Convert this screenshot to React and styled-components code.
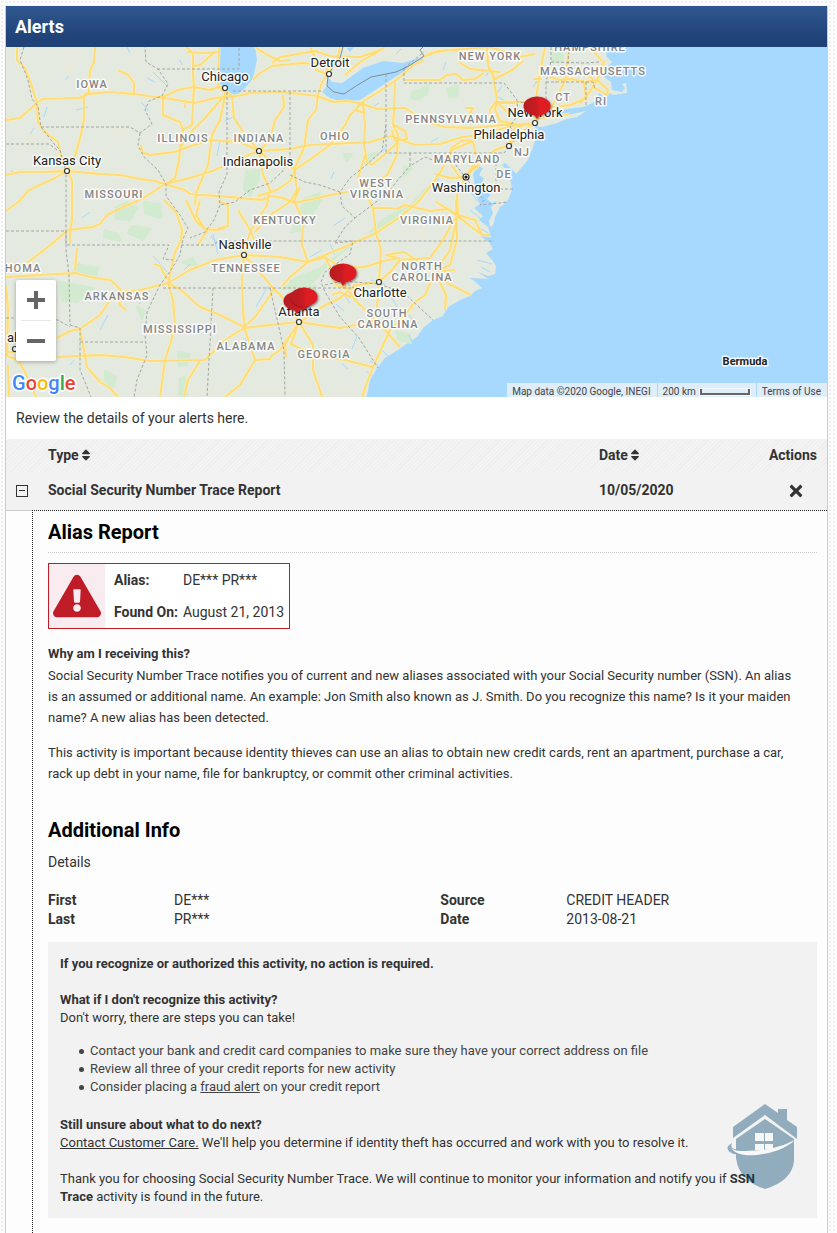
import { useState } from "react";
import styled, { createGlobalStyle } from "styled-components";
import { FaExclamationTriangle, FaSort, FaTimes } from "react-icons/fa";

const GlobalStyle = createGlobalStyle`
  * {
    box-sizing: border-box;
  }

  body {
    margin: 0;
    color: #333;
    background-color: #fcfcfc;
    background-image: radial-gradient(#efefef 1px, transparent 1px);
    background-size: 4px 4px;
    font-family: Roboto, "Liberation Sans", sans-serif;
    font-size: 14px;
    line-height: 18px;
  }

  h1, h2, h3, p, ul, dl, dd {
    margin: 0;
    padding: 0;
  }

  button {
    border: none;
    padding: 0;
    background: none;
    color: inherit;
    font: inherit;
    cursor: pointer;
  }

  a {
    color: inherit;
  }
`;

const Page = styled.main`
  padding: 6px 9px 0 5px;
`;

const Panel = styled.section`
  min-height: calc(100vh - 6px);
  border: 1px solid #ccc;
  border-width: 0 1px;
  background: #fff;
`;

const PanelHeader = styled.header`
  display: flex;
  align-items: center;
  height: 41px;
  padding: 0 9px;
  background: linear-gradient(#2f578f, #1f4278 80%);
  color: #fff;
`;

const Title = styled.h1`
  font-size: 18px;
  font-weight: 700;
`;

const MapFrame = styled.div`
  position: relative;
  height: 350px;
  overflow: hidden;
  background: #a7d9ff;
`;

const MapSvg = styled.svg`
  display: block;
  width: 100%;
  height: 100%;
`;

const MapText = styled.text`
  font-size: ${({ $kind }) => ($kind === "city" ? "13px" : "11px")};
  font-weight: ${({ $kind }) => ($kind === "city" ? 400 : $kind === "island" ? 700 : 500)};
  fill: ${({ $kind }) => ($kind === "state" ? "#858585" : "#222")};
  letter-spacing: ${({ $kind }) => ($kind === "state" ? "1px" : "normal")};
  text-anchor: middle;
  paint-order: stroke;
  stroke: #fff;
  stroke-opacity: 0.85;
  stroke-width: 3px;
  stroke-linejoin: round;
`;

const Zoom = styled.div`
  position: absolute;
  left: 10px;
  bottom: 36px;
  display: flex;
  flex-direction: column;
  align-items: center;
  width: 40px;
  border-radius: 2px;
  background: #fff;
  box-shadow: 0 1px 4px rgba(0, 0, 0, 0.3);
`;

const ZoomButton = styled.button`
  display: grid;
  place-items: center;
  width: 30px;
  height: 40px;

  &:first-child {
    height: 41px;
    border-bottom: 1px solid #e6e6e6;
  }
`;

const Logo = styled.svg`
  position: absolute;
  left: 4px;
  bottom: 0;
  font-size: 20px;
  font-weight: 500;
`;

const Legal = styled.div`
  position: absolute;
  right: 0;
  bottom: 0;
  display: flex;
  gap: 1px;
  height: 14px;
  color: #444;
  font-size: 10px;
  line-height: 17px;
`;

const LegalItem = styled.span`
  display: flex;
  gap: 4px;
  padding: 0 6px 0 5px;
  background: rgba(245, 245, 245, 0.7);

  a {
    text-decoration: none;
  }
`;

const ScaleBar = styled.span`
  width: 50px;
  height: 6px;
  margin-top: 6px;
  border: 2px solid #666;
  border-top: none;
  outline: 1px solid rgba(255, 255, 255, 0.6);
`;

const Intro = styled.p`
  padding: 12px 10px;
`;

const AlertTable = styled.table`
  width: 100%;
  border-spacing: 0;
  table-layout: fixed;

  th, td {
    padding: 0 0 2px;
    text-align: left;
  }

  col:nth-child(1) {
    width: 26px;
  }

  col:nth-child(3) {
    width: 160px;
  }

  col:nth-child(4) {
    width: 68px;
  }
`;

const HeadRow = styled.tr`
  height: 33px;
  background: repeating-linear-gradient(135deg, #f3f3f3 0 2px, #eeeeee 2px 3px);
`;

const AlertRow = styled.tr`
  height: 38px;
  background: #f2f2f2;
  font-weight: 700;
`;

const Cell = styled.td`
  && {
    padding-left: ${({ $indent }) => ($indent ? 16 : 0)}px;
    padding-right: ${({ $end }) => $end || 0}px;
    text-align: ${({ $end }) => ($end ? "right" : "left")};
  }

  svg {
    vertical-align: middle;
  }
`;

const SortButton = styled.button`
  display: inline-flex;
  align-items: center;
  font-weight: 700;
  vertical-align: middle;
`;

const DetailCell = styled.td`
  && {
    padding: 9px 10px 15px 15px;
  }

  border-top: 1px dotted #222;
  border-left: 1px dotted #222;
  background: #fdfdfd;
`;

const Gutter = styled.td`
  border-top: 1px solid #ccc;
  background: #fdfdfd;
`;

const Heading = styled.h2`
  color: #000;
  font-size: 20px;
  font-weight: 700;
  line-height: 24px;
`;

const AliasHeading = styled(Heading)`
  padding-bottom: 8px;
  border-bottom: 1px dotted #ccc;
`;

const AliasCard = styled.div`
  display: inline-flex;
  margin: 10px 0 13px;
  border: 1px solid #c01c28;
  background: #fff;
  vertical-align: top;
`;

const Warning = styled.div`
  display: grid;
  place-items: center;
  width: 56px;
  background: #f9ecf0;
  color: #c01c28;
`;

const AliasFacts = styled.dl`
  display: grid;
  grid-template-columns: auto auto;
  align-items: center;
  column-gap: 5px;
  padding: 0 5px 0 9px;
  line-height: 32px;

  dt {
    font-weight: 700;
  }
`;

const Copy = styled.p`
  margin-bottom: 14px;
  padding-right: 20px;
  font-size: 13px;
  line-height: 21px;
`;

const Question = styled.h3`
  font-size: 13px;
  font-weight: 700;
  line-height: ${({ $loose }) => ($loose ? 23 : 18)}px;
`;

const InfoHeading = styled(Heading)`
  margin: 34px 0 11px;
`;

const InfoGrid = styled.dl`
  display: grid;
  grid-template-columns: 126px 17fr 126px 16fr;
  margin: 20px 0 13px;
  line-height: 19px;

  dt {
    font-weight: 700;
  }
`;

const Advice = styled.div`
  display: flex;
  flex-direction: column;
  gap: 18px;
  padding: 13px 32px 12px 12px;
  background: #f2f2f2;
  font-size: 13px;
`;

const Steps = styled.ul`
  margin: -3px 0 2px;
  padding-left: 19px;
  color: #444;
  list-style: none;

  li::before {
    content: "";
    display: inline-block;
    width: 5px;
    height: 5px;
    margin: 0 6px 1px 0;
    border-radius: 50%;
    background: #444;
  }
`;

const Badge = styled.a`
  position: fixed;
  right: 38px;
  bottom: 43px;
  opacity: 0.4;

  svg {
    display: block;
  }
`;

const LAND =
  "M0 40H608L606 56 612 62 607 67 604 77 611 82 612 90 622 92 625 88 622 84 626 83 627 93 613 95 609 93 605 98 599 93 595 102 583 107 567 109 553 112 542 118 557 116 568 115 586 111 577 117 567 119 557 123 542 127 535 126 536 137 533 147 528 160 522 167 516 174 513 170 505 163 502 165 508 172 511 183 512 190 508 200 503 205 500 207 495 217 493 225 490 227 489 221 493 213 491 207 497 201 492 203 487 199 491 194 485 192 481 184 484 178 479 175 483 168 478 166 473 174 475 187 467 190 476 196 480 204 474 208 483 216 479 220 488 227 491 237 480 236 489 242 493 249 486 253 492 260 496 266 495 274 488 276 478 272 488 279 471 278 482 288 475 291 470 296 462 299 448 307 443 316 433 320 423 328 417 337 405 345 398 350 385 358 377 368 370 380 366 400H0Z";

const WATER =
  "M219 40L220 67 218 78 222 88 229 95 238 94 246 87 253 78 257 60 254 40ZM322 92L328 85 327 76 332 82 342 83 348 79 363 68 383 61 403 63 423 57 422 62 403 72 380 87 360 100 342 102 330 98ZM347 48L354 47 350 52ZM591 103L611 102 613 104 602 101ZM623 106L626 107 623 107Z";

const GREENS =
  "M412 92L421 89 429 85 427 94 418 100 411 98ZM447 89L458 85 457 96 449 97ZM553 55L562 50 563 61 553 62ZM404 166L412 168 404 176ZM364 157L377 152 373 160 364 163ZM344 154L352 154 347 161ZM246 172L260 170 258 180 250 196 244 189ZM304 199L319 193 321 200 302 230 291 232 300 214ZM440 174L423 196 400 214 384 226 370 232 388 216 409 207ZM350 246L330 262 312 283 283 289 296 278 320 268ZM290 281L316 286 316 302 291 298ZM396 331L410 335 411 343 399 340ZM116 207L127 202 138 208 130 220 116 219ZM144 202L160 204 162 218 145 214ZM105 230L118 234 121 241 104 238ZM132 226L151 229 143 240 128 233ZM78 264L98 268 96 276 73 272ZM60 282L94 288 77 302 62 300ZM178 352L190 354 187 365 179 366ZM182 263L193 258 197 266ZM105 371L116 377 113 388 105 384ZM180 378L185 377 187 396 179 395ZM137 307L145 311 142 319Z";

const PALE_LANDS =
  "M387 50L405 56 381 60 372 53ZM377 116L385 122 379 129ZM325 110L340 108 337 116ZM60 60L81 63 70 78ZM104 132L125 127 128 142ZM23 128L37 139 29 150ZM412 230L430 222 424 238ZM404 299L425 307 410 320ZM322 334L347 338 343 350 326 346ZM178 225L196 231 184 240ZM125 318L136 330 126 340Z";

const RIVERS = [
  "M127 47l3 6M153 72l15 15M147 78l8 4M180 60l2 5M66 80l2-4M44 117l3-10M76 110l12-3M141 102l8 9M217 156l3-16M30 134l4-6M11 170l3 3M225 121l10-5",
  "M82 218l8-6M153 256l14 16M149 291l-10 13M108 315l-8 15M213 234l5 20M268 286l-12 21M190 264l-6 6M245 338l2 4M70 365l4-5M218 245l-7-9",
  "M379 153l6-5M331 179l3-7M371 108l8-5M446 62l-3 8M490 70l-4 6M431 142l7-4M345 218l-12 8M439 178l-6 11M502 86l-5 7M401 49l-5 5",
  "M310 257l12-7M330 244l5 11M350 303l-5-7M371 280l14 4M391 297l7 11M336 304l8 7M357 336l-5 13M416 275l4-8M430 225l9-6M342 364l6 5M409 315l5 7",
  "M551 108L540 115M509 179l-7-6M478 202L467 187M481 219L470 210M491 235L477 226M492 264L477 260M481 283L470 278M490 272L481 267M378 365L370 361M389 357L382 350M413 344L409 335M373 377L366 371M541 75l-8 12M559 72l-4 11M505 101l-7-4",
];

const ROADS = [
  "M17 47V60L25 68 31 84 37 103 38 122 45 132 58 142 62 160 67 171 72 180 72 220 70 230",
  "M6 120L20 118 37 103 42 99 80 98 88 94 110 92 135 94 155 97 165 98 195 103 215 98 235 96",
  "M95 47L94 62 90 70 89 92 84 95 84 120 80 138 75 156 67 171 55 178 29 190 20 200",
  "M118 70L128 75 134 83V93M155 97L165 96 178 90 193 87 210 90 222 86",
  "M163 99V115L180 122 183 130 180 148 179 160 175 178 165 184",
  "M186 47L193 53V75L194 88 193 105 192 125 182 130M187 52L203 53 219 52M194 66L200 65 215 52M185 103V108",
  "M219 47L218 85 226 94 217 104 205 118 193 130 180 148M226 92L220 120 212 135 208 165 196 193 195 205",
  "M6 175L20 172 45 172 67 171 100 174 120 175 140 179 155 181 165 184 190 178 215 170 235 160 259 151 290 149 310 145 330 144 370 142 390 136 399 139",
  "M165 184L145 197 135 202 125 206 107 215 100 224 93 227 68 230 48 247 36 256 27 263",
  "M165 184L185 190 190 194 230 197 262 200 271 196 283 198 295 203 330 195 348 192M70 230V244M6 211L21 200",
  "M259 151L240 142 222 141 210 140 185 148 174 152 150 155 142 152 141 145",
  "M227 92L232 97 234 118 245 135 259 151 263 175 270 190 267 205 250 232 244 255",
  "M222 88L233 97 250 93 280 92 300 94 317 96 333 102 347 101 360 103 377 109 405 108 416 115 430 123 445 127 475 128 500 125 530 124",
  "M259 151L270 140 275 120 284 107 283 95M259 151L270 160 296 169 312 158 330 145 345 125 350 115 365 100 385 88 400 77 413 65 424 60",
  "M253 80L260 73 272 66 303 63 325 65 329 74M255 47L267 55 280 61 290 60M272 63L280 57 315 51 330 56 360 57 380 50M310 47L314 55 316 70 327 74M345 75L360 62 374 54 385 47",
  "M340 47L337 60 329 72 322 82 318 95 316 110 308 120 304 148 294 169 297 190 290 202 270 215 255 232M296 169L290 181 277 190 258 196",
  "M363 102L365 125 364 145 367 162 372 165 384 155 398 142M365 155L358 178 373 208 376 233 381 250 379 282 376 320",
  "M395 83L394 110 393 125 398 135 397 155 387 175 372 185M394 125L405 131 407 139 395 141 392 130M360 102L356 110 364 113",
  "M423 57L438 51 450 50 458 51 460 63 470 69 500 72M430 53L450 50 490 47 520 57 535 54M405 80L440 80 447 75 456 74 463 80 475 79 484 73",
  "M487 47L488 65 493 75 497 100 490 110 492 122M488 67L495 79 512 70 523 61M465 108L473 108 467 118M498 103L515 103M497 102L507 112",
  "M399 139L415 145 440 144 462 137 480 135 515 125M473 141L452 150 440 173 420 200 400 217 376 233 342 248 308 262 290 277 282 286",
  "M473 141L463 140 451 148 450 163 460 177 466 177M473 141L477 160 466 177 450 178 435 174",
  "M466 177L477 165 495 150 509 145 525 130 535 121 545 108 570 105 585 99 592 88 597 80 605 65M466 177L478 164",
  "M466 177L457 195 458 215 453 235 450 250 435 272 425 295 415 302 405 315 390 330 383 345 373 367 366 385 362 397",
  "M373 208L388 208 397 209 405 205 430 211 448 209 458 215 475 220 482 235M436 202L448 209 482 235 490 235",
  "M458 215L453 222 443 240 430 258 400 260 390 272 379 282 355 285 340 298 320 308 300 322 285 342 280 350 270 357",
  "M6 277L40 275 75 273 90 277 110 280 116 285 122 292 140 290 168 283 190 270 215 260 244 255 280 257 308 262 325 257 342 268 365 267 383 261 400 258",
  "M57 357L100 355 125 357 150 361 205 360 225 340 244 328 270 325 299 322 340 328 355 325 376 320",
  "M164 200L176 212 182 230 181 240 175 252 168 283 173 300 175 325 170 345 165 360 160 397M200 361L188 380 184 397",
  "M244 255L242 280 243 310 245 330 255 360 240 385 225 397M255 360L270 359 272 355",
  "M57 338L70 331 80 329 100 315 110 300 118 293M80 329L83 345 87 367 100 382 110 388 118 397M118 293L120 305 126 310",
  "M168 283L181 290 200 307 220 315 244 327 255 317 267 300 274 288M154 264L160 266 167 279",
  "M244 255L262 275 273 288 285 300 299 322 313 345 313 370 322 397M308 355L345 360 372 367",
  "M308 262L302 245 303 220 294 201 300 187M325 257L330 267 336 285 350 290M342 268L345 285 355 300 376 320 400 347M340 265L338 278",
  "M238 210L250 230 254 240M200 201L196 215 205 229 217 230 225 228M186 200L196 221 207 231 198 245M217 229L228 226 228 205 218 201",
  "M6 285L8 310 7 356 18 360 25 372 36 397M6 352L17 352M8 365L9 397M75 270L77 248M299 322L285 344 286 357",
  "M516 124L500 121 495 109 497 102 533 102 545 108M535 121L536 99 539 78 543 57 545 47M542 79L533 79M549 77L560 80 572 79 585 82 597 80",
  "M545 109L552 106 565 81 568 57 570 47M583 80L586 96 580 103M597 80L608 90 607 95 595 88 592 78M590 47L602 61M592 78L579 69 600 68 605 61",
  "M530 123L515 128 509 145 493 151M535 119L556 116 570 114M456 200L457 240 450 265 435 272 445 282 471 295M435 272L446 295 445 310M435 272L455 270",
  "M400 259L386 255 404 252 418 261M358 285L350 297 340 292 332 295M299 322L291 344 306 351M466 177L473 165 477 168 479 158",
];

const BORDERS = [
  "M24 47L20 60 28 80 32 99 38 106 41 127 55 145 60 150 64 165 66 171V250L69 275 70 325",
  "M6 144H49L57 150M41 127H130L140 133 152 124 145 110 149 101 162 96 168 84 158 69 146 62 145 47",
  "M157 69H239V47M140 133L138 145 144 157 158 170 166 184 166 196 180 215 188 228 183 239 180 255 171 270 160 285 147 312 145 335 147 355 137 380 134 397",
  "M227 92V174L219 192 220 205 214 220 205 232 190 238M233 91H322M290 92V160L282 172 270 183 250 190 235 202 220 205",
  "M6 231H66V245H169L163 259 173 260M70 325L80 328V370L91 397M6 318H30L58 320 70 327M80 342H145",
  "M181 245H215L217 241H494M163 288H354L340 280M213 288L207 397M270 288L284 350 285 397M290 175L305 182 320 185 340 192 350 178 365 166 382 151 386 125",
  "M386 74V152M404 68V83H504L517 100 518 115 510 126 516 138 504 153H386M410 153V166L425 157 440 163 452 160 465 177 484 200 480 205 500 203 507 202",
  "M496 153V189H513M340 192L342 206 355 218 345 227 335 243M355 218L376 202 390 190 397 181 410 166M335 243L353 241 350 254 325 272 321 282 325 292 340 317 359 338 378 368",
  "M325 285L342 281 379 284 404 293 433 320M404 68L424 52M551 47V61L546 82V104L518 102M551 62L585 63 599 62M546 82H593L595 90M586 82V105M568 64L569 47",
];

const STATES = [
  ["IOWA", 92, 88],
  ["ILLINOIS", 183, 142],
  ["INDIANA", 259, 142],
  ["OHIO", 335, 140],
  ["MISSOURI", 114, 198],
  ["KENTUCKY", 285, 224],
  ["WEST", 376, 187],
  ["VIRGINIA", 377, 198],
  ["VIRGINIA", 427, 224],
  ["PENNSYLVANIA", 451, 123],
  ["NEW YORK", 490, 60],
  ["HAMPSHIRE", 590, 51],
  ["MASSACHUSETTS", 593, 75],
  ["CT", 563, 101],
  ["RI", 601, 105],
  ["NJ", 522, 156],
  ["MARYLAND", 467, 163],
  ["DE", 504, 178],
  ["HOMA", 23, 272],
  ["TENNESSEE", 246, 272],
  ["ARKANSAS", 117, 300],
  ["MISSISSIPPI", 180, 333],
  ["ALABAMA", 246, 350],
  ["GEORGIA", 324, 358],
  ["NORTH", 422, 270],
  ["CAROLINA", 422, 281],
  ["SOUTH", 387, 317],
  ["CAROLINA", 388, 328],
];

const CITIES = [
  { name: "Chicago", x: 225, y: 81, dot: [225, 88] },
  { name: "Detroit", x: 330, y: 67, dot: [329, 74] },
  { name: "Kansas City", x: 67, y: 165, dot: [67, 171] },
  { name: "Indianapolis", x: 258, y: 166, dot: [259, 151] },
  { name: "Nashville", x: 245, y: 249, dot: [244, 255] },
  { name: "Charlotte", x: 380, y: 297, dot: [379, 282] },
  { name: "Atlanta", x: 299, y: 316, dot: [299, 322] },
  { name: "Washington", x: 466, y: 192, dot: [466, 177], capital: true },
  { name: "Philadelphia", x: 509, y: 139, dot: [509, 146] },
  { name: "New York", x: 535, y: 117, dot: [535, 123] },
  { name: "al", x: 12, y: 342, dot: [15, 349] },
];

const PINS = [
  [537, 106],
  [343, 273],
  [297, 301],
  [304, 297],
];

const LOGO_LETTERS = [
  ["G", "#4285f4"],
  ["o", "#ea4335"],
  ["o", "#fbbc05"],
  ["g", "#4285f4"],
  ["l", "#34a853"],
  ["e", "#ea4335"],
];

function AlertMap() {
  return (
    <MapFrame>
      <MapSvg viewBox="6 47 821 350" preserveAspectRatio="xMinYMid slice" role="img" aria-label="Map of alert locations">
        <defs>
          <linearGradient id="pin">
            <stop offset="0" stopColor="#b51d22" />
            <stop offset="0.45" stopColor="#c71c20" />
            <stop offset="0.6" stopColor="#de1f21" />
          </linearGradient>
          <filter id="pinShadow" x="-20%" y="-20%" width="150%" height="150%">
            <feDropShadow dx="1" dy="1" stdDeviation="1" floodOpacity="0.5" />
          </filter>
        </defs>
        <path d={LAND} fill="#e4eadf" />
        <path d={PALE_LANDS} fill="#e8e9dd" />
        <path d={GREENS} fill="#d2ead0" strokeLinejoin="round" stroke="#d2ead0" strokeWidth="2" />
        <path d={WATER} fill="#a7d9ff" />
        <path d={RIVERS.join("")} fill="none" stroke="#a7d9ff" />
        <path d={ROADS.join("")} fill="none" stroke="#fff0b5" strokeWidth="3" strokeLinejoin="round" />
        <path d={ROADS.join("")} fill="none" stroke="#fddc79" strokeWidth="2" strokeLinejoin="round" />
        <path d={BORDERS.join("")} fill="none" stroke="#a3a6a5" strokeDasharray="3 2" />
        <path
          d="M343 47L340 58 333 67 328 76 327 86 334 92 344 94 356 86 371 77 396 72 409 66 424 56 420 50 423 47"
          fill="none"
          stroke="#858d91"
        />
        {STATES.map(([name, x, y]) => (
          <MapText key={`${name}-${x}`} $kind="state" x={x} y={y}>
            {name}
          </MapText>
        ))}
        {CITIES.map(({ name, x, y, dot, capital }) => (
          <g key={name}>
            <MapText $kind="city" x={x} y={y}>
              {name}
            </MapText>
            <circle cx={dot[0]} cy={dot[1]} r={capital ? 3 : 2.5} fill="#fff" stroke="#333" strokeWidth="1.2" />
            {capital && <circle cx={dot[0]} cy={dot[1]} r="1.6" fill="#111" />}
          </g>
        ))}
        <MapText $kind="island" x="745" y="365">
          Bermuda
        </MapText>
        {PINS.map(([x, y]) => (
          <g key={x} filter="url(#pinShadow)" fill="url(#pin)">
            <path d={`M${x - 4} ${y + 7}h8l-4 6z`} fill="#c91d22" />
            <ellipse cx={x} cy={y} rx="13.5" ry="9.5" />
          </g>
        ))}
      </MapSvg>
      <Zoom>
        <ZoomButton type="button" aria-label="Zoom in">
          <svg width="18" height="18" fill="#666">
            <path d="M7 0h4v7h7v4h-7v7H7v-7H0V7h7z" />
          </svg>
        </ZoomButton>
        <ZoomButton type="button" aria-label="Zoom out">
          <svg width="18" height="4" fill="#666">
            <path d="M0 0h18v4H0z" />
          </svg>
        </ZoomButton>
      </Zoom>
      <Logo width="72" height="26" viewBox="0 0 72 26">
        <text x="2" y="19" stroke="#fff" strokeWidth="3" strokeLinejoin="round" paintOrder="stroke">
          {LOGO_LETTERS.map(([letter, color], i) => (
            <tspan key={i} fill={color}>
              {letter}
            </tspan>
          ))}
        </text>
      </Logo>
      <Legal>
        <LegalItem>Map data ©2020 Google, INEGI</LegalItem>
        <LegalItem>
          200 km <ScaleBar />
        </LegalItem>
        <LegalItem>
          <a href="#terms">Terms of Use</a>
        </LegalItem>
      </Legal>
    </MapFrame>
  );
}

function AlertDetail() {
  return (
    <>
      <AliasHeading>Alias Report</AliasHeading>
      <AliasCard>
        <Warning>
          <FaExclamationTriangle size={48} />
        </Warning>
        <AliasFacts>
          <dt>Alias:</dt>
          <dd>DE*** PR***</dd>
          <dt>Found On:</dt>
          <dd>August 21, 2013</dd>
        </AliasFacts>
      </AliasCard>
      <Question $loose>Why am I receiving this?</Question>
      <Copy>
        Social Security Number Trace notifies you of current and new aliases associated with your Social Security
        number (SSN). An alias is an assumed or additional name. An example: Jon Smith also known as J. Smith. Do you
        recognize this name? Is it your maiden name? A new alias has been detected.
      </Copy>
      <Copy>
        This activity is important because identity thieves can use an alias to obtain new credit cards, rent an
        apartment, purchase a car, rack up debt in your name, file for bankruptcy, or commit other criminal
        activities.
      </Copy>

      <InfoHeading>Additional Info</InfoHeading>
      <p>Details</p>
      <InfoGrid>
        <dt>First</dt>
        <dd>DE***</dd>
        <dt>Source</dt>
        <dd>CREDIT HEADER</dd>
        <dt>Last</dt>
        <dd>PR***</dd>
        <dt>Date</dt>
        <dd>2013-08-21</dd>
      </InfoGrid>

      <Advice>
        <Question>If you recognize or authorized this activity, no action is required.</Question>
        <div>
          <Question>What if I don't recognize this activity?</Question>
          <p>Don't worry, there are steps you can take!</p>
        </div>
        <Steps>
          <li>Contact your bank and credit card companies to make sure they have your correct address on file</li>
          <li>Review all three of your credit reports for new activity</li>
          <li>
            Consider placing a <a href="#fraud-alert">fraud alert</a> on your credit report
          </li>
        </Steps>
        <div>
          <Question>Still unsure about what to do next?</Question>
          <p>
            <a href="#contact">Contact Customer Care.</a> We'll help you determine if identity theft has occurred and
            work with you to resolve it.
          </p>
        </div>
        <p>
          Thank you for choosing Social Security Number Trace. We will continue to monitor your information and notify
          you if <strong>SSN Trace</strong> activity is found in the future.
        </p>
      </Advice>
    </>
  );
}

export default function App() {
  const [open, setOpen] = useState(true);

  return (
    <Page>
      <GlobalStyle />
      <Panel>
        <PanelHeader>
          <Title>Alerts</Title>
        </PanelHeader>
        <AlertMap />
        <Intro>Review the details of your alerts here.</Intro>
        <AlertTable>
          <colgroup>
            <col />
            <col />
            <col />
            <col />
          </colgroup>
          <thead>
            <HeadRow>
              <Cell />
              <Cell as="th" $indent>
                <SortButton type="button">
                  Type <FaSort size={14} />
                </SortButton>
              </Cell>
              <Cell as="th">
                <SortButton type="button">
                  Date <FaSort size={14} />
                </SortButton>
              </Cell>
              <Cell as="th" $end={10}>
                Actions
              </Cell>
            </HeadRow>
          </thead>
          <tbody>
            <AlertRow>
              <Cell $end={4}>
                <button type="button" aria-label="Toggle details" aria-expanded={open} onClick={() => setOpen(!open)}>
                  <svg width="12" height="12" fill="none" stroke="#333">
                    <rect x="0.5" y="0.5" width="11" height="11" />
                    <path d={open ? "M3 5.5h6" : "M3 5.5h6M6 3v6"} />
                  </svg>
                </button>
              </Cell>
              <Cell $indent>Social Security Number Trace Report</Cell>
              <Cell>10/05/2020</Cell>
              <Cell $end={22}>
                <button type="button" aria-label="Dismiss alert">
                  <FaTimes size={18} />
                </button>
              </Cell>
            </AlertRow>
            {open && (
              <tr>
                <Gutter />
                <DetailCell colSpan={3}>
                  <AlertDetail />
                </DetailCell>
              </tr>
            )}
          </tbody>
        </AlertTable>
      </Panel>
      <Badge href="#protection" aria-label="Home protection">
        <svg width="72" height="86" viewBox="0 0 72 86">
          <path d="M6 23L38 0l13 9V5h9v11l10 7v12L38 11 6 34z" fill="#00486e" />
          <path d="M9 35L38 15l29 20v22Q65 77 38 85 12 77 9 54z" fill="#00486e" />
          <path d="M28 29h9v8h-9zM38 29h8v8h-8zM28 40h9v6h-9zM38 40h8v5h-8z" fill="#fff" />
          <path d="M5 39Q-1 42 1 46 4 51 12 50V46Q2 45 5 39z" fill="#00486e" />
          <path d="M3 42Q5 47 14 47 45 48 68 36 55 48 30 51 8 53 3 42z" fill="#fff" />
        </svg>
      </Badge>
    </Page>
  );
}
